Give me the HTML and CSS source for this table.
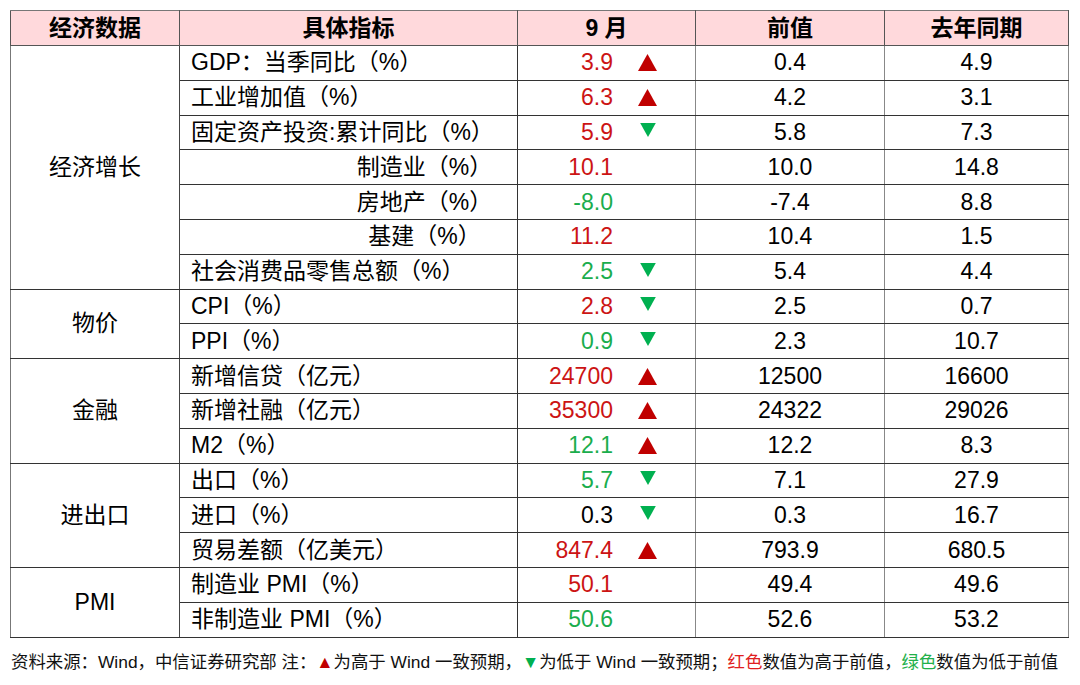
FILE: index.html
```html
<!DOCTYPE html>
<html lang="zh-CN">
<head>
<meta charset="utf-8">
<title>经济数据</title>
<link rel="stylesheet" href="styles.css">
</head>
<body>
<table class="data">
  <colgroup>
    <col class="c1"><col class="c2"><col class="c3"><col class="c4"><col class="c5">
  </colgroup>
  <thead>
    <tr><th>经济数据</th><th>具体指标</th><th>9 月</th><th>前值</th><th>去年同期</th></tr>
  </thead>
  <tbody>
    <tr><td class="grp" rowspan="7">经济增长</td><td class="ind">GDP：当季同比（%）</td><td class="cur"><div class="cv"><span class="num red">3.9</span><svg class="tri" viewBox="0 0 19 17"><polygon points="9.5,0 19,17 0,17" fill="#c00000"/></svg></div></td><td class="v">0.4</td><td class="v">4.9</td></tr>
    <tr><td class="ind">工业增加值（%）</td><td class="cur"><div class="cv"><span class="num red">6.3</span><svg class="tri" viewBox="0 0 19 17"><polygon points="9.5,0 19,17 0,17" fill="#c00000"/></svg></div></td><td class="v">4.2</td><td class="v">3.1</td></tr>
    <tr><td class="ind">固定资产投资:累计同比（%）</td><td class="cur"><div class="cv"><span class="num red">5.9</span><svg class="tri dn" viewBox="0 0 19 17"><polygon points="0,0 19,0 9.5,17" fill="#00b050"/></svg></div></td><td class="v">5.8</td><td class="v">7.3</td></tr>
    <tr><td class="ind sub">制造业（%）</td><td class="cur"><div class="cv"><span class="num red">10.1</span></div></td><td class="v">10.0</td><td class="v">14.8</td></tr>
    <tr><td class="ind sub">房地产（%）</td><td class="cur"><div class="cv"><span class="num green">-8.0</span></div></td><td class="v">-7.4</td><td class="v">8.8</td></tr>
    <tr><td class="ind sub">基建（%）</td><td class="cur"><div class="cv"><span class="num red">11.2</span></div></td><td class="v">10.4</td><td class="v">1.5</td></tr>
    <tr><td class="ind">社会消费品零售总额（%）</td><td class="cur"><div class="cv"><span class="num green">2.5</span><svg class="tri dn" viewBox="0 0 19 17"><polygon points="0,0 19,0 9.5,17" fill="#00b050"/></svg></div></td><td class="v">5.4</td><td class="v">4.4</td></tr>

    <tr><td class="grp" rowspan="2">物价</td><td class="ind">CPI（%）</td><td class="cur"><div class="cv"><span class="num red">2.8</span><svg class="tri dn" viewBox="0 0 19 17"><polygon points="0,0 19,0 9.5,17" fill="#00b050"/></svg></div></td><td class="v">2.5</td><td class="v">0.7</td></tr>
    <tr><td class="ind">PPI（%）</td><td class="cur"><div class="cv"><span class="num green">0.9</span><svg class="tri dn" viewBox="0 0 19 17"><polygon points="0,0 19,0 9.5,17" fill="#00b050"/></svg></div></td><td class="v">2.3</td><td class="v">10.7</td></tr>

    <tr><td class="grp" rowspan="3">金融</td><td class="ind">新增信贷（亿元）</td><td class="cur"><div class="cv"><span class="num red">24700</span><svg class="tri" viewBox="0 0 19 17"><polygon points="9.5,0 19,17 0,17" fill="#c00000"/></svg></div></td><td class="v">12500</td><td class="v">16600</td></tr>
    <tr><td class="ind">新增社融（亿元）</td><td class="cur"><div class="cv"><span class="num red">35300</span><svg class="tri" viewBox="0 0 19 17"><polygon points="9.5,0 19,17 0,17" fill="#c00000"/></svg></div></td><td class="v">24322</td><td class="v">29026</td></tr>
    <tr><td class="ind">M2（%）</td><td class="cur"><div class="cv"><span class="num green">12.1</span><svg class="tri" viewBox="0 0 19 17"><polygon points="9.5,0 19,17 0,17" fill="#c00000"/></svg></div></td><td class="v">12.2</td><td class="v">8.3</td></tr>

    <tr><td class="grp" rowspan="3">进出口</td><td class="ind">出口（%）</td><td class="cur"><div class="cv"><span class="num green">5.7</span><svg class="tri dn" viewBox="0 0 19 17"><polygon points="0,0 19,0 9.5,17" fill="#00b050"/></svg></div></td><td class="v">7.1</td><td class="v">27.9</td></tr>
    <tr><td class="ind">进口（%）</td><td class="cur"><div class="cv"><span class="num">0.3</span><svg class="tri dn" viewBox="0 0 19 17"><polygon points="0,0 19,0 9.5,17" fill="#00b050"/></svg></div></td><td class="v">0.3</td><td class="v">16.7</td></tr>
    <tr><td class="ind">贸易差额（亿美元）</td><td class="cur"><div class="cv"><span class="num red">847.4</span><svg class="tri" viewBox="0 0 19 17"><polygon points="9.5,0 19,17 0,17" fill="#c00000"/></svg></div></td><td class="v">793.9</td><td class="v">680.5</td></tr>

    <tr><td class="grp" rowspan="2">PMI</td><td class="ind">制造业 PMI（%）</td><td class="cur"><div class="cv"><span class="num red">50.1</span></div></td><td class="v">49.4</td><td class="v">49.6</td></tr>
    <tr><td class="ind">非制造业 PMI（%）</td><td class="cur"><div class="cv"><span class="num green">50.6</span></div></td><td class="v">52.6</td><td class="v">53.2</td></tr>
  </tbody>
</table>
<p class="note">资料来源：Wind，中信证券研究部 注：<span class="r">▲</span>为高于 Wind 一致预期，<span class="g">▼</span>为低于 Wind 一致预期；<span class="r2">红色</span>数值为高于前值，<span class="g2">绿色</span>数值为低于前值</p>
</body>
</html>
```

FILE: styles.css
```css
html, body {
  margin: 0;
  padding: 0;
  background: #ffffff;
}
body {
  padding: 10px 0 0 10px;
  font-family: "Liberation Sans", "Noto Sans CJK SC", Arial, sans-serif;
  color: #000;
}
.data {
  border-collapse: collapse;
  table-layout: fixed;
  width: 1058px;
  border: 1px solid #777;
}
.c1 { width: 169px; }
.c2 { width: 338px; }
.c3 { width: 178px; }
.c4 { width: 189px; }
.c5 { width: 184px; }

.data th {
  background: #ffd9dc;
  height: 34px;
  font-size: 23px;
  font-weight: bold;
  text-align: center;
  padding: 0;
  border: 1px solid #555;
  border-top-color: #777;
  line-height: 1;
}
.data td {
  height: 33.8px;
  padding: 0;
  font-size: 23px;
  line-height: 1;
  border-top: 1px solid #333;
  border-bottom: 1px solid #333;
  border-left: 1px solid #888;
  border-right: 1px solid #888;
  white-space: nowrap;
}
.data td.grp {
  text-align: center;
  border-left-color: #777;
  border-right-color: #444;
}
.data td.ind {
  padding-left: 11px;
  border-right-color: #333;
}
.data td.ind.sub {
  text-align: center;
  padding-left: 152px;
}
.data td.v {
  text-align: center;
}
.cv {
  display: flex;
  align-items: center;
}
.num {
  width: 95px;
  text-align: right;
  color: #000;
}
.num.red { color: #cc1414; }
.num.green { color: #1aad4d; }
.tri {
  width: 19px;
  height: 17px;
  margin-left: 25px;
}
.tri.dn {
  width: 18px;
  height: 14px;
  margin-left: 26px;
  margin-top: -4px;
}
.note {
  margin: 13px 0 0 1px;
  font-size: 17.4px;
  line-height: 22px;
  color: #111;
  white-space: nowrap;
}
.note .r { color: #c00000; }
.note .g { color: #00b050; }
.note .r2 { color: #e02020; }
.note .g2 { color: #22b04a; }
```
